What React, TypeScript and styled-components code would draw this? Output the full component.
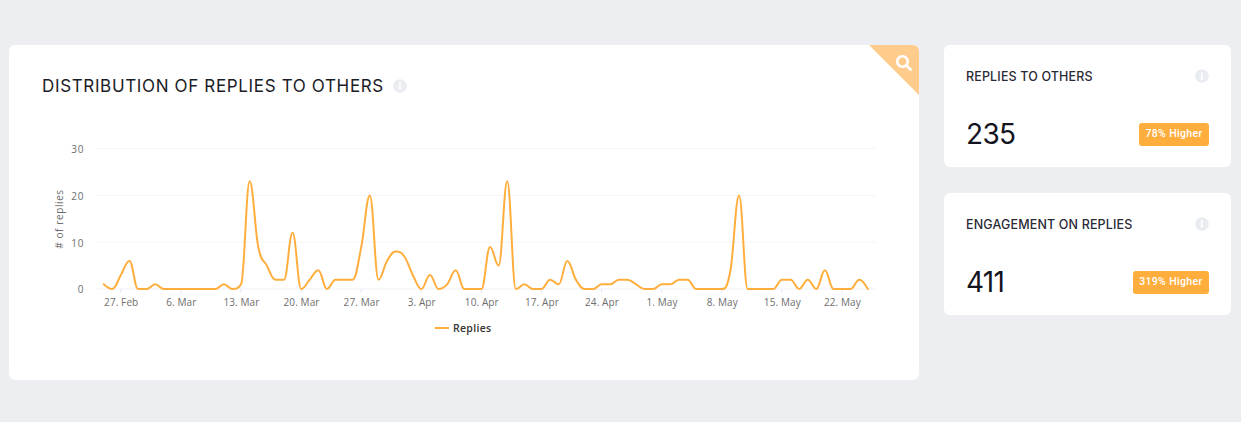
import React from "react";
import styled, { createGlobalStyle } from "styled-components";
import { FaInfoCircle, FaSearch } from "react-icons/fa";

const GlobalStyle = createGlobalStyle`
  html, body { margin: 0; padding: 0; background: #eceef2; }
  body { font-family: "Inter", "Liberation Sans", sans-serif; }
`;

const Page = styled.div`
  width: 1241px;
  height: 422px;
  box-sizing: border-box;
  padding: 45px 10px 0 9px;
  display: flex;
  align-items: flex-start;
  gap: 25px;
  overflow: hidden;
`;

const MainCard = styled.section`
  position: relative;
  width: 910px;
  height: 335px;
  box-sizing: border-box;
  padding: 30px 0 0 15px;
  background: #fff;
  border-radius: 6px;
  overflow: hidden;
`;

const Heading = styled.div`
  display: flex;
  align-items: center;
  gap: 9px;
  height: 22px;
  margin-left: 18px;
`;

const Title = styled.h2`
  margin: 0;
  font-size: 17px;
  line-height: 22px;
  font-weight: 400;
  letter-spacing: 0.65px;
  color: #1c1c26;
  white-space: nowrap;
`;

const InfoIcon = styled(FaInfoCircle)`
  display: block;
  flex: none;
  width: 14px;
  height: 14px;
  margin-bottom: 1px;
  color: #e9ecf1;
`;

const Corner = styled.div`
  position: absolute;
  top: 0;
  right: 0;
  width: 50px;
  height: 50px;
  background: #ffcc8c;
  clip-path: polygon(0 0, 100% 0, 100% 100%);
`;

const CornerIcon = styled(FaSearch)`
  position: absolute;
  top: 10px;
  right: 7px;
  width: 16px;
  height: 16px;
  color: #fff;
`;

const Chart = styled.svg`
  display: block;
  margin-top: 23px;
  width: 880px;
  height: 230px;
`;

const AxisLabel = styled.text<{ $tracking: number }>`
  font-family: "Open Sans", "Liberation Sans", sans-serif;
  font-size: 10px;
  letter-spacing: ${(p) => p.$tracking}px;
  fill: #6e6e6e;
`;

const LegendLabel = styled.text`
  font-family: "Open Sans", "Liberation Sans", sans-serif;
  font-size: 10.5px;
  font-weight: 600;
  letter-spacing: 0.3px;
  fill: #333;
`;

const Side = styled.div`
  width: 287px;
  display: flex;
  flex-direction: column;
  gap: 26px;
`;

const StatCard = styled.section`
  height: 122px;
  box-sizing: border-box;
  padding: 23px 22px 0;
  background: #fff;
  border-radius: 6px;
  display: flex;
  flex-direction: column;
`;

const StatHead = styled.div`
  display: flex;
  justify-content: space-between;
  align-items: center;
  height: 17px;
`;

const StatTitle = styled.h3`
  margin: 0;
  font-size: 12.5px;
  line-height: 18px;
  font-weight: 500;
  letter-spacing: 0.15px;
  color: #2b2b36;
`;

const StatRow = styled.div`
  display: flex;
  justify-content: space-between;
  align-items: center;
  margin-top: 32px;
  height: 34px;
`;

const StatValue = styled.div`
  font-size: 28px;
  line-height: 34px;
  font-weight: 400;
  color: #14141e;
  letter-spacing: -0.7px;
`;

const Badge = styled.span`
  display: block;
  box-sizing: border-box;
  height: 23px;
  padding: 0 6.5px;
  border-radius: 3px;
  background: #ffae3d;
  color: #fff;
  font-family: "Roboto", "Liberation Sans", sans-serif;
  font-size: 10.5px;
  font-weight: 500;
  line-height: 22px;
  letter-spacing: 0.35px;
  white-space: nowrap;
`;

// prettier-ignore
const data = [1,0,3,6,0,0,1,0,0,0,0,0,0,0,1,0,1,23,9,5,2,2,12,0,2,4,0,2,2,2,9,20,2,6,8,7,3,0,3,0,1,4,0,0,0,9,5,23,0,1,0,0,2,1,6,2,0,0,1,1,2,2,1,0,0,1,1,2,2,0,0,0,0,4,20,0,0,0,0,2,2,0,2,0,4,0,0,0,2,0];

// Chart space: page coordinates minus the chart's origin in the page.
const ox = 24;
const oy = 120;
const px = (i: number) => 103.7 + (60.1 / 7) * i - ox;
const py = (v: number) => 289 - 4.68 * v - oy;
const baseY = py(0);

function splinePath(values: number[]): string {
  const pts = values.map((v, i) => [px(i), py(v)] as const);
  const s = 1.5;
  const d = s + 1;
  const ctrl = (i: number) => {
    const [x, y] = pts[i];
    if (i === 0 || i === pts.length - 1) return { lx: x, ly: y, rx: x, ry: y };
    const [lastX, lastY] = pts[i - 1];
    const [nextX, nextY] = pts[i + 1];
    const lx = (s * x + lastX) / d;
    let ly = (s * y + lastY) / d;
    const rx = (s * x + nextX) / d;
    let ry = (s * y + nextY) / d;
    const c = ((ry - ly) * (rx - x)) / (rx - lx) + y - ry;
    ly += c;
    ry += c;
    if (ly > lastY && ly > y) {
      ly = Math.max(lastY, y);
      ry = 2 * y - ly;
    } else if (ly < lastY && ly < y) {
      ly = Math.min(lastY, y);
      ry = 2 * y - ly;
    }
    if (ry > nextY && ry > y) {
      ry = Math.max(nextY, y);
      ly = 2 * y - ry;
    } else if (ry < nextY && ry < y) {
      ry = Math.min(nextY, y);
      ly = 2 * y - ry;
    }
    return { lx, ly, rx, ry };
  };
  let out = `M${pts[0][0]} ${pts[0][1]}`;
  for (let i = 1; i < pts.length; i++) {
    const a = ctrl(i - 1);
    const b = ctrl(i);
    out += ` C${a.rx} ${a.ry} ${b.lx} ${b.ly} ${pts[i][0]} ${pts[i][1]}`;
  }
  return out;
}

const xTicks = ["27. Feb", "6. Mar", "13. Mar", "20. Mar", "27. Mar", "3. Apr", "10. Apr", "17. Apr", "24. Apr", "1. May", "8. May", "15. May", "22. May"];
const yTicks = [30, 20, 10, 0];
const plotLeft = 97 - ox;
const plotRight = 876 - ox;

function ReplyChart() {
  return (
    <Chart viewBox="0 0 880 230">
      {yTicks.map((t) => (
        <g key={t}>
          <line x1={plotLeft} x2={plotRight} y1={py(t)} y2={py(t)} stroke={t === 0 ? "#eef1f8" : "#f4f5f7"} strokeWidth="1" />
          <AxisLabel $tracking={0.6} x={84 - ox} y={py(t) + 4.4} textAnchor="end">{t}</AxisLabel>
        </g>
      ))}
      {xTicks.map((t, i) => {
        const x = 120.7 + 60.1 * i - ox;
        return (
          <g key={t}>
            <line x1={x} x2={x} y1={baseY} y2={baseY + 4} stroke="#e2e7f4" strokeWidth="1" />
            <AxisLabel $tracking={0.1} x={x + 0.5} y={baseY + 16.5} textAnchor="middle">{t}</AxisLabel>
          </g>
        );
      })}
      <AxisLabel $tracking={0.6} transform={`translate(${62.5 - ox} ${219 - oy}) rotate(-90)`} textAnchor="middle">
        # of replies
      </AxisLabel>
      <path d={splinePath(data)} fill="none" stroke="#ffae3d" strokeWidth="2" strokeLinejoin="round" strokeLinecap="round" />
      <line x1={435 - ox} x2={449 - ox} y1={328 - oy} y2={328 - oy} stroke="#ffae3d" strokeWidth="2" />
      <LegendLabel x={453 - ox} y={331.8 - oy}>Replies</LegendLabel>
    </Chart>
  );
}

const stats = [
  { title: "REPLIES TO OTHERS", value: "235", badge: "78% Higher" },
  { title: "ENGAGEMENT ON REPLIES", value: "411", badge: "319% Higher" },
];

export default function App() {
  return (
    <>
      <GlobalStyle />
      <Page>
        <MainCard>
          <Heading>
            <Title>DISTRIBUTION OF REPLIES TO OTHERS</Title>
            <InfoIcon />
          </Heading>
          <ReplyChart />
          <Corner>
            <CornerIcon />
          </Corner>
        </MainCard>
        <Side>
          {stats.map((s) => (
            <StatCard key={s.title}>
              <StatHead>
                <StatTitle>{s.title}</StatTitle>
                <InfoIcon />
              </StatHead>
              <StatRow>
                <StatValue>{s.value}</StatValue>
                <Badge>{s.badge}</Badge>
              </StatRow>
            </StatCard>
          ))}
        </Side>
      </Page>
    </>
  );
}
